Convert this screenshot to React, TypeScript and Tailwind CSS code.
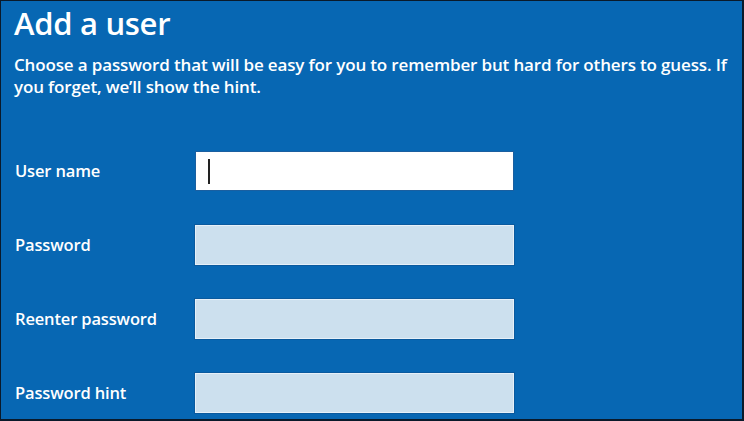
export default function App() {
  const fields = [
    { label: "User name", active: true },
    { label: "Password", active: false },
    { label: "Reenter password", active: false },
    { label: "Password hint", active: false },
  ];

  return (
    <div
      className="w-[744px] h-[421px] overflow-hidden bg-[#0767b3] border-l border-t border-r-2 border-b-2 border-[#0a1a2a] text-white"
      style={{ fontFamily: '"Open Sans", "Noto Sans", sans-serif' }}
    >
      <div className="pl-[13px] pt-[1px]">
        <h1 className="text-[31px] leading-[42px] font-semibold tracking-[-0.3px]">Add a user</h1>
        <p className="mt-[10px] pr-[8px] text-[17px] leading-[22px] font-semibold tracking-[-0.15px]">
          Choose a password that will be easy for you to remember but hard for others to guess. If you forget, we’ll show the hint.
        </p>

        <div className="mt-[53px] flex flex-col gap-[34px]">
          {fields.map((f) => (
            <div key={f.label} className="flex items-center">
              <span className="w-[181px] pl-[1px] text-[16.5px] font-semibold tracking-[-0.15px]">{f.label}</span>
              <div
                className={
                  f.active
                    ? "w-[319px] h-[40px] bg-white border border-[#1a5fa0] flex items-center pl-[12px]"
                    : "w-[319px] h-[40px] bg-[#cce0ee] border border-[#e6f0f8] shadow-[0_0_0_1px_#0a5a9e]"
                }
              >
                {f.active && <div className="w-[2px] h-[25px] bg-[#222]" />}
              </div>
            </div>
          ))}
        </div>
      </div>
    </div>
  );
}
